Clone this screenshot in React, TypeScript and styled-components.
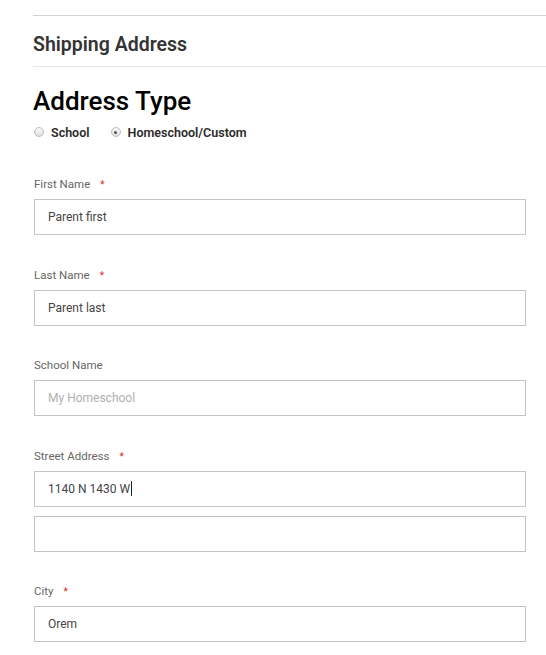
import React from "react";
import styled, { createGlobalStyle } from "styled-components";

const GlobalStyle = createGlobalStyle`
  html, body {
    margin: 0;
    padding: 0;
    background: #fff;
    font-family: Roboto, "Liberation Sans", sans-serif;
  }
`;

const Page = styled.div`
  padding: 15px 0 0 33px;
  width: 513px;
`;

const Rule = styled.div<{ light?: boolean }>`
  height: 0;
  border-top: 1px solid ${({ light }) => (light ? "#e6e6e6" : "#d2d2d2")};
`;

const SectionTitle = styled.h2`
  margin: 0;
  padding-top: 7px;
  height: 43px;
  line-height: 44px;
  font-size: 19.5px;
  font-weight: 600;
  color: #333;
`;

const Heading = styled.h1`
  margin: 18px 0 0;
  line-height: 32px;
  font-size: 26px;
  font-weight: 500;
  color: #000;
`;

const RadioRow = styled.div`
  display: flex;
  align-items: center;
  gap: 20px;
  margin-top: 8px;
  height: 14px;
`;

const RadioOption = styled.label`
  display: flex;
  align-items: center;
  gap: 7px;
  font-size: 12.5px;
  font-weight: 600;
  color: #2a2a2a;
`;

const RadioDot = styled.span<{ checked?: boolean }>`
  position: relative;
  box-sizing: border-box;
  width: 10px;
  height: 10px;
  margin-left: 1px;
  border-radius: 50%;
  border: 1px solid #bdbdbd;
  background: linear-gradient(#fafafa, #e0e0e0);
  ${({ checked }) =>
    checked &&
    `
    &::after {
      content: "";
      position: absolute;
      left: 2.5px;
      top: 2.5px;
      width: 3px;
      height: 3px;
      border-radius: 50%;
      background: #555;
    }
  `}
`;

const Fields = styled.div`
  display: flex;
  flex-direction: column;
  gap: 31.5px;
  margin: 37px 0 0 1px;
  width: 492px;
`;

const Field = styled.div`
  display: flex;
  flex-direction: column;
  gap: 7px;
`;

const Label = styled.div`
  height: 16px;
  line-height: 16px;
  font-size: 11.5px;
  color: #666;
`;

const Required = styled.span`
  margin-left: 10px;
  color: #e02424;
  font-size: 10px;
`;

const Inputs = styled.div`
  display: flex;
  flex-direction: column;
  gap: 9px;
`;

const Box = styled.div<{ placeholder?: boolean }>`
  box-sizing: border-box;
  height: 36px;
  padding: 0 13px;
  display: flex;
  align-items: center;
  border: 1px solid #c4c4c4;
  background: #fff;
  font-size: 12px;
  color: ${({ placeholder }) => (placeholder ? "#b0b0b0" : "#444")};
`;

const Caret = styled.span`
  display: inline-block;
  width: 1px;
  height: 15px;
  margin-left: 1px;
  background: #222;
`;

type FieldDef = {
  label: string;
  required?: boolean;
  values: { text: string; placeholder?: boolean; caret?: boolean }[];
};

const fields: FieldDef[] = [
  { label: "First Name", required: true, values: [{ text: "Parent first" }] },
  { label: "Last Name", required: true, values: [{ text: "Parent last" }] },
  { label: "School Name", values: [{ text: "My Homeschool", placeholder: true }] },
  {
    label: "Street Address",
    required: true,
    values: [{ text: "1140 N 1430 W", caret: true }, { text: "" }],
  },
  { label: "City", required: true, values: [{ text: "Orem" }] },
];

export default function App() {
  return (
    <Page>
      <GlobalStyle />
      <Rule />
      <SectionTitle>Shipping Address</SectionTitle>
      <Rule light />
      <Heading>Address Type</Heading>
      <RadioRow>
        <RadioOption>
          <RadioDot />
          School
        </RadioOption>
        <RadioOption>
          <RadioDot checked />
          Homeschool/Custom
        </RadioOption>
      </RadioRow>
      <Fields>
        {fields.map((f) => (
          <Field key={f.label}>
            <Label>
              {f.label}
              {f.required && <Required>*</Required>}
            </Label>
            <Inputs>
              {f.values.map((v, i) => (
                <Box key={i} placeholder={v.placeholder}>
                  {v.text}
                  {v.caret && <Caret />}
                </Box>
              ))}
            </Inputs>
          </Field>
        ))}
      </Fields>
    </Page>
  );
}
